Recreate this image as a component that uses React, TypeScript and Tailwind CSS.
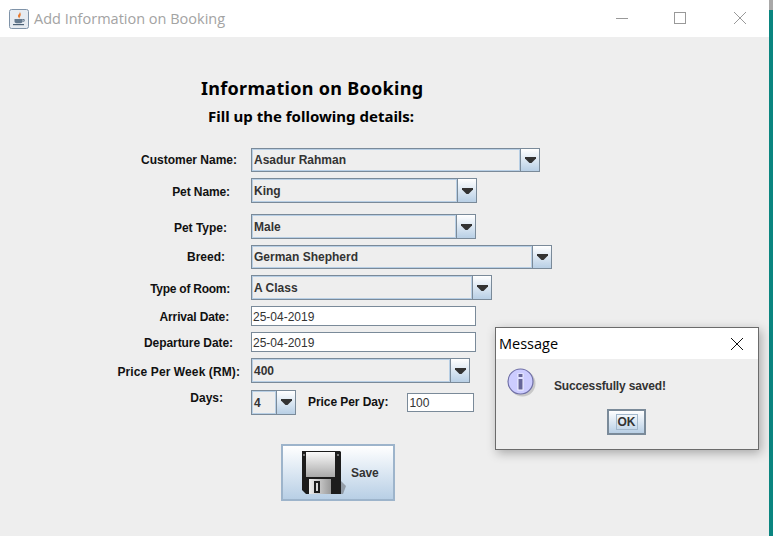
import React from 'react';

const ui = "font-['Liberation_Sans',Arial,sans-serif]";

// Metal look and feel combo box
const Combo = ({ value, width, size = 'h-[25px] leading-[23px]' }: { value: string; width: string; size?: string }) => (
  <div className={`flex border border-[#7a8a99] bg-[#eeeeee] ${size} ${width}`}>
    <div className="flex-1 min-w-0 border border-[#b8cfe5] pl-[1px] text-[12px] font-bold text-[#333333] whitespace-nowrap overflow-hidden">
      {value}
    </div>
    <div className="w-[19px] shrink-0 border-l border-[#7a8a99] bg-gradient-to-b from-white to-[#b8cfe5] flex items-center justify-center">
      <svg width="11" height="6" viewBox="0 0 11 6">
        <path d="M0 0h11v1.5L6.5 6h-2L0 1.5z" fill="#333333" />
      </svg>
    </div>
  </div>
);

const Label = ({ text, pad }: { text: string; pad: string }) => (
  <div className={`w-[251px] shrink-0 text-right text-[12px] font-bold text-[#111111] whitespace-nowrap ${pad}`}>{text}</div>
);

const DateField = ({ value }: { value: string }) => (
  <div className="w-[225px] h-[20px] border border-[#7a8a99] bg-white pl-[1px] text-[12px] leading-[20px] text-[#333333]">
    {value}
  </div>
);

const JavaIcon = () => (
  <svg width="20" height="20" viewBox="0 0 20 20" className="shrink-0">
    <rect x="0.5" y="0.5" width="19" height="19" rx="2" fill="#e6ebf1" stroke="#7f93a8" />
    <path d="M10.500 2.500c1.500 2-2.500 3-1.200 5.500 0.300 0.700 0.900 1.200 1.200 1.500-0.300-2 3-3 0-7z" fill="#e8792e" />
    <path d="M5.500 10h8v2.500c0 1-1 1.700-2 1.700h-4c-1 0-2-0.700-2-1.700z" fill="#64798e" />
    <path d="M13.500 10.500h1.700v1.700h-1.700" fill="none" stroke="#64798e" />
    <path d="M4 15h11v1.200H4z" fill="#4c6176" />
  </svg>
);

const InfoIcon = () => (
  <svg width="34" height="34" viewBox="0 0 34 34" className="shrink-0">
    <circle cx="15.500" cy="15.500" r="13" fill="#9a9a9a" opacity="0.45" />
    <circle cx="13.500" cy="13.500" r="12.500" fill="#ccccff" stroke="#6f6fa6" strokeWidth="1.200" />
    <rect x="10.500" y="5.500" width="6" height="4" fill="#f4f4ff" />
    <rect x="11.500" y="6" width="4" height="3" fill="#666699" />
    <rect x="10.500" y="10.500" width="6" height="12" fill="#f4f4ff" />
    <rect x="11.500" y="11" width="4" height="10.500" fill="#666699" />
  </svg>
);

const DiskIcon = () => (
  <svg width="46" height="46" viewBox="0 0 46 46" className="shrink-0">
    <defs>
      <linearGradient id="label" x1="0" y1="0" x2="0" y2="1">
        <stop offset="0" stopColor="#fafafa" />
        <stop offset="1" stopColor="#a9a9a9" />
      </linearGradient>
      <linearGradient id="shutter" x1="0" y1="0" x2="1" y2="0">
        <stop offset="0" stopColor="#eeeeee" />
        <stop offset="1" stopColor="#9a9a9a" />
      </linearGradient>
    </defs>
    <path d="M38 44l2-13 5 5-3 8z" fill="#7d838b" opacity="0.7" />
    <path d="M1 1h38l1 1v42H5l-4-4z" fill="#1c1c1c" />
    <rect x="5" y="2" width="29" height="25" fill="url(#label)" />
    <rect x="8" y="29" width="22" height="15" fill="url(#shutter)" />
    <rect x="13" y="31" width="6" height="12" fill="#1c1c1c" />
    <rect x="15" y="33" width="2" height="8" fill="#d8d8d8" />
    <rect x="2" y="4" width="2" height="2" fill="#777777" />
    <rect x="36" y="4" width="2" height="2" fill="#777777" />
  </svg>
);

export default function App() {
  return (
    <div className={`relative flex w-[773px] h-[536px] overflow-hidden ${ui}`}>
      <div className="flex flex-col w-[769px] shrink-0">
        {/* title bar */}
        <div className="flex items-center h-[37px] shrink-0 bg-white pl-[9px]">
          <JavaIcon />
          <span className="ml-[5px] text-[14.500px] text-[#a3a3a3] font-['Open_Sans',sans-serif]">Add Information on Booking</span>
          <div className="ml-auto mb-[1px] flex items-center pr-[22px] gap-[46px]">
            <div className="w-[12px] h-[1px] bg-[#999999]" />
            <div className="w-[12px] h-[12px] border border-[#999999]" />
            <svg width="14" height="14" viewBox="0 0 14 14" className="ml-[1px]">
              <path d="M1 1l12 12M13 1L1 13" stroke="#999999" strokeWidth="1" />
            </svg>
          </div>
        </div>

        {/* form */}
        <div className="flex-1 bg-[#eeeeee]">
          <div className="pl-[201px] pt-[39px] text-[18px] leading-[24px] font-bold text-black font-['Noto_Sans',sans-serif] tracking-[0.3px]">
            Information on Booking
          </div>
          <div className="pl-[208px] pt-[6px] text-[15px] leading-[20px] font-bold text-black font-['Noto_Sans',sans-serif]">
            Fill up the following details:
          </div>

          <div className="flex items-center mt-[22px]">
            <Label text="Customer Name:" pad="pr-[14px]" />
            <Combo value="Asadur Rahman" width="w-[289px]" size="h-[24px] leading-[21px]" />
          </div>
          <div className="flex items-center mt-[6px]">
            <Label text="Pet Name:" pad="pr-[21px] pt-[2px] tracking-[-0.1px]" />
            <Combo value="King" width="w-[226px]" />
          </div>
          <div className="flex items-center mt-[11px]">
            <Label text="Pet Type:" pad="pr-[24px] pt-[2px]" />
            <Combo value="Male" width="w-[225px]" />
          </div>
          <div className="flex items-center mt-[6px]">
            <Label text="Breed:" pad="pr-[26px]" />
            <Combo value="German Shepherd" width="w-[301px]" size="h-[24px] leading-[21px]" />
          </div>
          <div className="flex items-center mt-[6px]">
            <Label text="Type of Room:" pad="pr-[21px] pt-[2px] tracking-[-0.25px]" />
            <Combo value="A Class" width="w-[241px]" />
          </div>
          <div className="flex items-center mt-[6px]">
            <Label text="Arrival Date:" pad="pr-[22px] pt-[2px] tracking-[-0.15px]" />
            <DateField value="25-04-2019" />
          </div>
          <div className="flex items-center mt-[6px]">
            <Label text="Departure Date:" pad="pr-[18px] pt-[2px] tracking-[-0.07px]" />
            <DateField value="25-04-2019" />
          </div>
          <div className="flex items-center mt-[6px]">
            <Label text="Price Per Week (RM):" pad="pr-[11px] pt-[2px] tracking-[0.1px]" />
            <Combo value="400" width="w-[219px]" />
          </div>
          <div className="flex items-center mt-[6px]">
            <Label text="Days:" pad="pr-[28px] pb-[8px]" />
            <Combo value="4" width="w-[45px]" />
            <span className="ml-[12px] text-[12px] font-bold text-[#111111] whitespace-nowrap tracking-[-0.07px]">Price Per Day:</span>
            <div className="ml-[19px] w-[67px] h-[19px] border border-[#7a8a99] bg-white pl-[1px] text-[12px] leading-[18px] text-[#333333]">100</div>
          </div>

          <button className="flex items-center ml-[281px] mt-[29px] w-[114px] h-[57px] border-2 border-[#9db4cb] bg-gradient-to-b from-white to-[#b8cfe5] pl-[18px] text-[12px] font-bold text-[#333333]">
            <DiskIcon />
            <span className="ml-[4px] tracking-[-0.1px]">Save</span>
          </button>
        </div>
      </div>

      {/* desktop behind the window */}
      <div className="flex-1 bg-[#0b8580] border-t-[10px] border-[#a8a8a8]" />

      {/* message dialog */}
      <div className="absolute left-[495px] top-[327px] w-[264px] h-[123px] flex flex-col border border-[#6b6b6b] bg-[#eeeeee] shadow-[2px_3px_10px_rgba(0,0,0,0.3)]">
        <div className="flex items-center justify-between h-[31px] shrink-0 bg-white pl-[3px] pr-[14px]">
          <span className="text-[14.500px] text-black font-['Open_Sans',sans-serif]">Message</span>
          <svg width="14" height="14" viewBox="0 0 14 14">
            <path d="M1 1l12 12M13 1L1 13" stroke="#111111" strokeWidth="1" />
          </svg>
        </div>
        <div className="flex items-start pl-[11px] pt-[9px]">
          <InfoIcon />
          <span className="ml-[13px] mt-[9px] text-[12px] font-bold text-[#333333] whitespace-nowrap tracking-[-0.15px]">Successfully saved!</span>
        </div>
        <button className="ml-[111px] mt-[7px] flex items-center justify-center w-[39px] h-[26px] border-2 border-[#7a8a99] bg-gradient-to-b from-white to-[#b8cfe5]">
          <span className="px-[1px] border border-[#a3b8cc] text-[12px] leading-[14px] font-bold text-[#333333]">OK</span>
        </button>
      </div>
    </div>
  );
}
